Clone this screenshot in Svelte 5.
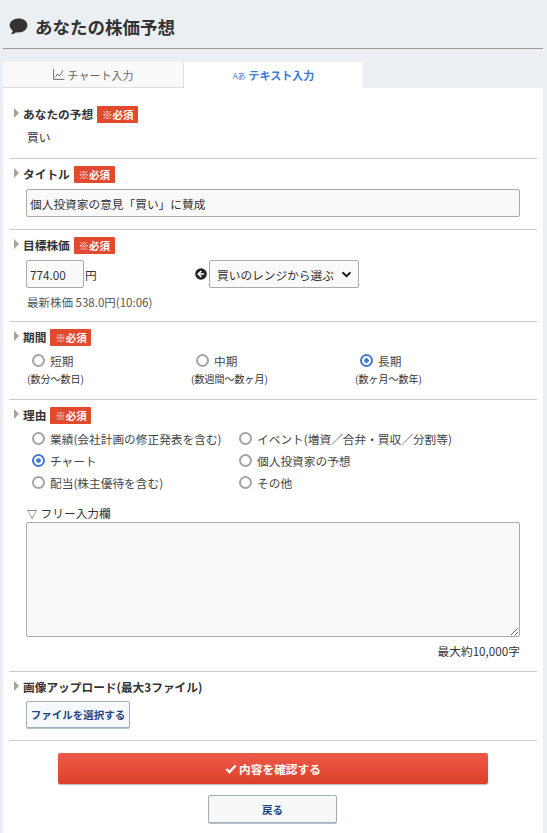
<script>
  const periods = [
    { label: '短期', note: '(数分～数日)' },
    { label: '中期', note: '(数週間～数ヶ月)' },
    { label: '長期', note: '(数ヶ月～数年)', checked: true }
  ];

  const reasons = [
    { label: '業績(会社計画の修正発表を含む)' },
    { label: 'イベント(増資／合弁・買収／分割等)' },
    { label: 'チャート', checked: true },
    { label: '個人投資家の予想' },
    { label: '配当(株主優待を含む)' },
    { label: 'その他' }
  ];
</script>

<div class="page">
  <h1 class="title">
    <svg class="balloon" viewBox="0 0 20 18" width="19" height="17" aria-hidden="true">
      <path d="M10 0.5C4.8 0.5 0.6 3.7 0.6 7.7c0 2.2 1.3 4.2 3.3 5.5-.2 1.5-1 2.9-2.1 3.9 2 .1 4.3-.7 5.7-2.1.8.2 1.6.3 2.5.3 5.2 0 9.4-3.2 9.4-7.6S15.200.5 10 .5z" fill="#333" />
    </svg>
    あなたの株価予想
  </h1>

  <div class="tabs">
    <div class="tab">
      <svg viewBox="0 0 14 13" width="12" height="11" aria-hidden="true">
        <path d="M0.6 0v12.300h12.800" fill="none" stroke="#666" stroke-width="1.100" />
        <path d="M2.700 9.800l2.600-4 2.200 2.600 4.300-6.700" fill="none" stroke="#666" stroke-width="1.100" />
      </svg>
      チャート入力
    </div>
    <div class="tab active">
      <span class="lang">Aあ</span>
      テキスト入力
    </div>
  </div>

  <form class="panel" on:submit|preventDefault>
    <section class="first">
      <div class="head"><h2>あなたの予想</h2><span class="req">※必須</span></div>
      <p class="value">買い</p>
    </section>

    <section class="title-sec">
      <div class="head"><h2>タイトル</h2><span class="req">※必須</span></div>
      <input class="field wide" type="text" value="個人投資家の意見「買い」に賛成" />
    </section>

    <section class="price">
      <div class="head"><h2>目標株価</h2><span class="req">※必須</span></div>
      <div class="price-row">
        <input class="field num" type="text" value="774.00" />
        <span class="yen">円</span>
        <svg class="back-arrow" viewBox="0 0 12 12" width="12" height="12" aria-hidden="true">
          <circle cx="6" cy="6" r="5.800" fill="#222" />
          <path d="M6.300 3L3.300 6l3 3M3.600 6H9" fill="none" stroke="#fff" stroke-width="1.700" />
        </svg>
        <div class="select-wrap">
          <select class="field range">
            <option>買いのレンジから選ぶ</option>
          </select>
          <svg class="chev" viewBox="0 0 12 8" width="11" height="7" aria-hidden="true">
            <path d="M1.500 1.500L6 6l4.500-4.500" fill="none" stroke="#111" stroke-width="2.200" />
          </svg>
        </div>
      </div>
      <p class="latest">最新株価 538.0円(10:06)</p>
    </section>

    <section class="period">
      <div class="head"><h2>期間</h2><span class="req">※必須</span></div>
      <div class="period-grid">
        {#each periods as p}
          <div>
            <label class="radio"><input type="radio" name="period" checked={p.checked} />{p.label}</label>
            <div class="note">{p.note}</div>
          </div>
        {/each}
      </div>
    </section>

    <section class="reason">
      <div class="head"><h2>理由</h2><span class="req">※必須</span></div>
      <div class="reason-grid">
        {#each reasons as r}
          <label class="radio"><input type="radio" name="reason" checked={r.checked} />{r.label}</label>
        {/each}
      </div>
      <div class="free-label"><span class="tri">▽</span> フリー入力欄</div>
      <textarea class="field memo"></textarea>
      <div class="limit">最大約10,000字</div>
    </section>

    <section class="upload">
      <div class="head"><h2>画像アップロード(最大3ファイル)</h2></div>
      <button class="sub-btn file" type="button">ファイルを選択する</button>
    </section>

    <div class="actions">
      <button class="confirm" type="submit">
        <svg viewBox="0 0 12 10" width="12" height="10" aria-hidden="true">
          <path d="M1.300 5l3.100 3L10.700 1.500" fill="none" stroke="#fff" stroke-width="2.400" />
        </svg>
        内容を確認する
      </button>
      <button class="sub-btn back" type="button">戻る</button>
    </div>
  </form>
</div>

<style>
  :global(body) {
    margin: 0;
    background: #ebeef2;
  }

  .page {
    width: 540px;
    margin-left: 3px;
    font-family: "Noto Sans CJK JP", "Noto Sans", sans-serif;
    font-size: 11.7px;
    color: #333;
  }

  .title {
    display: flex;
    align-items: center;
    gap: 7px;
    height: 49px;
    margin: 0;
    padding: 5px 0 0 6px;
    box-sizing: border-box;
    font-size: 17.500px;
    font-weight: 700;
    border-bottom: 1px solid #999;
  }

  .tabs {
    display: flex;
    margin-top: 13px;
    height: 26px;
  }

  .tab {
    width: 181px;
    display: flex;
    align-items: center;
    justify-content: center;
    gap: 3px;
    box-sizing: border-box;
    font-size: 11px;
    color: #666;
    background: #f9f9f9;
    border-right: 1px solid #ddd;
    border-bottom: 1px solid #ddd;
  }

  .tab.active {
    width: 179px;
    font-weight: 700;
    color: #3a7bd5;
    background: #fff;
    border: 0;
  }

  .lang {
    font-size: 8px;
    font-weight: 400;
  }

  .panel {
    background: #fff;
    padding: 0 6px;
    height: 745px;
    box-sizing: border-box;
  }

  section {
    padding-top: 7px;
    border-bottom: 1px solid #ccc;
    box-sizing: border-box;
  }

  section.first {
    padding-top: 18px;
    height: 71px;
  }

  .title-sec { height: 71px; }
  .price { height: 92px; }
  .period { height: 78px; }
  .reason { height: 272px; }
  .upload { height: 69px; }

  .head {
    display: flex;
    align-items: center;
    height: 17px;
    padding-left: 14px;
    position: relative;
  }

  .head::before {
    content: "";
    position: absolute;
    left: 5px;
    top: 2px;
    border-left: 5px solid #a8a29a;
    border-top: 5px solid transparent;
    border-bottom: 5px solid transparent;
  }

  h2 {
    margin: -2px 0 0;
    font-size: 11.700px;
    font-weight: 700;
    color: #333;
  }

  .req {
    margin-left: 4px;
    width: 41px;
    height: 17px;
    line-height: 17px;
    text-align: center;
    border-radius: 1px;
    background: #e2492f;
    color: #fff;
    font-size: 10.500px;
    font-weight: 700;
  }

  .value {
    margin: 5px 0 0 18px;
    line-height: 18px;
  }

  .field {
    box-sizing: border-box;
    height: 28px;
    padding: 0 3px;
    font: inherit;
    color: #333;
    background: #f9f9f9;
    border: 1px solid #aaa;
    border-radius: 2px;
  }

  .wide {
    display: block;
    width: 494px;
    margin: 6px 0 0 17px;
  }

  .price-row {
    display: flex;
    align-items: center;
    margin: 6px 0 0 17px;
  }

  .num {
    width: 58px;
  }

  .yen {
    margin-left: 1px;
    width: 110px;
  }

  .back-arrow {
    margin-right: 2px;
  }

  .select-wrap {
    position: relative;
  }

  .range {
    appearance: none;
    width: 150px;
    padding-left: 7px;
  }

  .chev {
    position: absolute;
    right: 7px;
    top: 11px;
    pointer-events: none;
  }

  .latest {
    margin: 5px 0 0 18px;
    line-height: 18px;
    color: #555;
    font-size: 11.500px;
  }

  .period-grid {
    display: grid;
    grid-template-columns: 164px 164px 164px;
    margin: 3px 0 0 18px;
  }

  .radio {
    display: flex;
    align-items: center;
    height: 22px;
    padding-left: 5px;
    color: #444;
  }

  .radio input {
    appearance: none;
    box-sizing: border-box;
    width: 13px;
    height: 13px;
    margin: 0 5px 0 0;
    background: #fff;
    border: 2px solid #a3a3a3;
    border-radius: 50%;
  }

  .radio input:checked {
    border-color: #3f7bd6;
    background: radial-gradient(circle, #3f7bd6 0 2px, #fff 2.500px);
  }

  .note {
    font-size: 10px;
    line-height: 14px;
    margin-top: 1px;
    color: #333;
  }

  .reason-grid {
    display: grid;
    grid-template-columns: 207px 1fr;
    margin: 3px 0 0 18px;
  }

  .free-label {
    margin: 12px 0 0 18px;
    line-height: 16px;
  }

  .tri {
    font-size: 10px;
    margin-right: 1px;
  }

  .memo {
    display: block;
    width: 494px;
    height: 115px;
    margin: 0 0 0 17px;
  }

  .limit {
    width: 511px;
    margin-top: 5px;
    text-align: right;
    line-height: 18px;
  }

  .sub-btn {
    box-sizing: border-box;
    font-family: inherit;
    font-weight: 700;
    font-size: 10.500px;
    color: #1c4587;
    background: #f6f8fa;
    border: 1px solid #a3adb8;
    border-radius: 2px;
    box-shadow: 0 1px 0 #b8c0c8;
    padding: 0;
  }

  .file {
    display: block;
    width: 104px;
    height: 27px;
    margin: 5px 0 0 17px;
  }

  .actions {
    display: flex;
    flex-direction: column;
    align-items: center;
    padding-top: 12px;
    gap: 11px;
  }

  .confirm {
    display: flex;
    align-items: center;
    justify-content: center;
    gap: 2px;
    width: 430px;
    height: 31px;
    padding: 0;
    font-family: inherit;
    font-size: 11.700px;
    font-weight: 700;
    color: #fff;
    border: 0;
    border-radius: 2px;
    background: linear-gradient(#ee5a49, #dc4229);
    box-shadow: 0 1px 1px #bbb;
  }

  .back {
    width: 129px;
    height: 28px;
    margin-right: 1px;
  }
</style>
